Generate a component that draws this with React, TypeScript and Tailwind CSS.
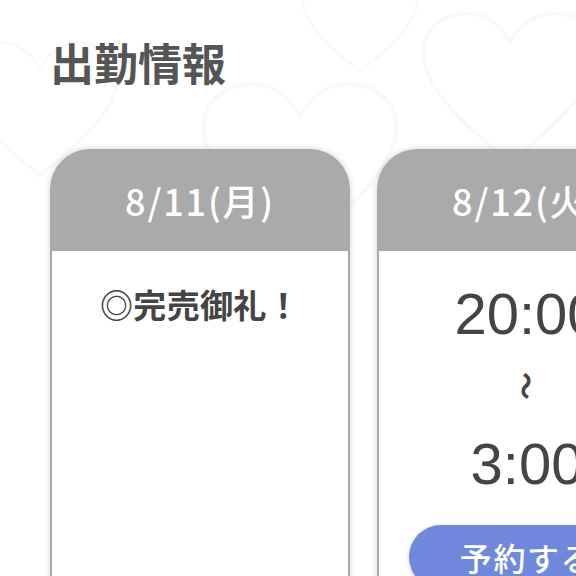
import React from "react";

const jp = { fontFamily: '"Noto Sans CJK JP", "Noto Sans", sans-serif' };

function Heart({ className }: { className: string }) {
  return (
    <svg viewBox="0 0 100 90" className={className} fill="none" stroke="#fbf8f9" strokeWidth="2">
      <path d="M50 85 C20 60 2 42 2 24 C2 10 13 2 26 2 C37 2 45 9 50 18 C55 9 63 2 74 2 C87 2 98 10 98 24 C98 42 80 60 50 85 Z" />
    </svg>
  );
}

function Card({ date, children }: { date: string; children: React.ReactNode }) {
  return (
    <div className="flex w-[300px] shrink-0 flex-col rounded-t-[40px] shadow-[0_0_6px_rgba(0,0,0,0.18)]">
      <div className="flex h-[102px] items-center justify-center rounded-t-[40px] bg-[#aaaaaa]">
        <span className="text-[36px] font-medium tracking-[0.05em] text-white" style={jp}>
          {date}
        </span>
      </div>
      <div className="flex h-[360px] flex-col items-center border-x-2 border-[#aaaaaa] bg-white">
        {children}
      </div>
    </div>
  );
}

export default function App() {
  return (
    <div className="relative h-[576px] w-[576px] overflow-hidden bg-white" style={jp}>
      <div className="pointer-events-none absolute inset-0">
        <Heart className="absolute left-[-40px] top-[40px] w-[160px]" />
        <Heart className="absolute left-[200px] top-[80px] w-[200px]" />
        <Heart className="absolute left-[420px] top-[10px] w-[180px]" />
        <Heart className="absolute left-[300px] top-[-30px] w-[120px]" />
      </div>
      <div className="relative flex flex-col pl-[50px] pt-[32px]">
        <h1 className="text-[44px] font-bold leading-[60px] text-[#555555]">出勤情報</h1>
        <div className="mt-[57px] flex gap-[27px]">
          <Card date="8/11(月)">
            <div className="mt-[29px] text-[33px] font-semibold leading-[48px] tracking-[0.01em] text-[#444444]">
              ◎完売御礼！
            </div>
          </Card>
          <Card date="8/12(火)">
            <div
              className="mt-[30px] text-[58px] leading-[66px] text-[#444444]"
              style={{ fontFamily: '"Liberation Sans", Arial, sans-serif' }}
            >
              20:00
            </div>
            <div className="mt-[24px] rotate-90 text-[28px] font-bold leading-[30px] text-[#444444]">〜</div>
            <div
              className="mt-[30px] text-[58px] leading-[66px] text-[#444444]"
              style={{ fontFamily: '"Liberation Sans", Arial, sans-serif' }}
            >
              3:00
            </div>
            <div className="mt-[28px] flex h-[64px] w-[236px] items-center justify-center rounded-full bg-[#7088dc] shadow-[0_1px_4px_rgba(0,0,0,0.2)]">
              <span className="text-[32px] font-medium tracking-[0.05em] text-white">予約する</span>
            </div>
          </Card>
        </div>
      </div>
    </div>
  );
}
